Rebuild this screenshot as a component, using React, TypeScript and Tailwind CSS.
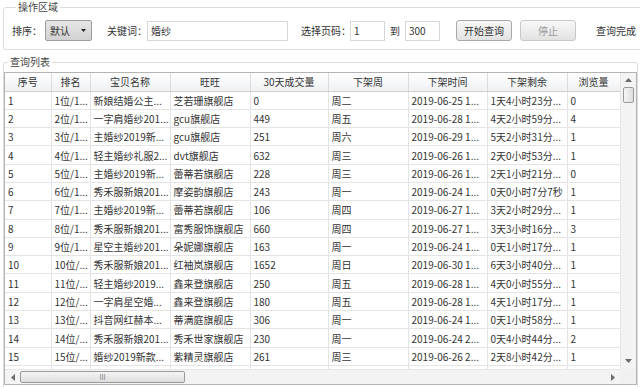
const font = { fontFamily: '"Noto Sans CJK SC", "Liberation Sans", sans-serif' };

const columns = [
  { title: '序号', width: 46 },
  { title: '排名', width: 39 },
  { title: '宝贝名称', width: 80 },
  { title: '旺旺', width: 80 },
  { title: '30天成交量', width: 78 },
  { title: '下架周', width: 80 },
  { title: '下架时间', width: 79 },
  { title: '下架剩余', width: 80 },
  { title: '浏览量', width: 53 },
];

const rows: string[][] = [
  ['1', '1位/1...', '新娘结婚公主...', '芝若珊旗舰店', '0', '周二', '2019-06-25 1...', '1天4小时23分...', '0'],
  ['2', '2位/1...', '一字肩婚纱201...', 'gcu旗舰店', '449', '周五', '2019-06-28 1...', '4天2小时59分...', '4'],
  ['3', '3位/1...', '主婚纱2019新...', 'gcu旗舰店', '251', '周六', '2019-06-29 1...', '5天2小时31分...', '1'],
  ['4', '4位/1...', '轻主婚纱礼服2...', 'dvt旗舰店', '632', '周三', '2019-06-26 1...', '2天0小时53分...', '1'],
  ['5', '5位/1...', '主婚纱2019新...', '蕾蒂若旗舰店', '228', '周三', '2019-06-26 1...', '2天1小时21分...', '0'],
  ['6', '6位/1...', '秀禾服新娘201...', '摩姿韵旗舰店', '243', '周一', '2019-06-24 1...', '0天0小时7分7秒', '1'],
  ['7', '7位/1...', '主婚纱2019新...', '蕾蒂若旗舰店', '106', '周四', '2019-06-27 1...', '3天2小时29分...', '1'],
  ['8', '8位/1...', '秀禾服新娘201...', '富秀服饰旗舰店', '660', '周四', '2019-06-27 1...', '3天3小时16分...', '3'],
  ['9', '9位/1...', '星空主婚纱201...', '朵妮娜旗舰店', '163', '周一', '2019-06-24 1...', '0天1小时17分...', '1'],
  ['10', '10位/...', '秀禾服新娘201...', '红袖岚旗舰店', '1652', '周日', '2019-06-30 1...', '6天3小时40分...', '1'],
  ['11', '11位/...', '轻主婚纱2019...', '鑫来登旗舰店', '250', '周五', '2019-06-28 1...', '4天0小时55分...', '1'],
  ['12', '12位/...', '一字肩星空婚...', '鑫来登旗舰店', '180', '周五', '2019-06-28 1...', '4天1小时17分...', '1'],
  ['13', '13位/...', '抖音网红赫本...', '蒂满庭旗舰店', '306', '周一', '2019-06-24 1...', '0天1小时58分...', '1'],
  ['14', '14位/...', '秀禾服新娘201...', '秀禾世家旗舰店', '230', '周一', '2019-06-24 2...', '0天4小时44分...', '2'],
  ['15', '15位/...', '婚纱2019新款...', '紫精灵旗舰店', '261', '周三', '2019-06-26 2...', '2天8小时42分...', '1'],
  ['16', '16位/...', '小婚纱2019新...', '瑞诗丽旗舰店', '204', '周一', '2019-06-24 1...', '0天1小时16分...', '0'],
];

function Arrow({ dir }: { dir: 'up' | 'down' | 'left' | 'right' }) {
  const pts = {
    up: '0,4 3.5,0 7,4',
    down: '0,0 7,0 3.5,4',
    left: '4,0 4,7 0,3.5',
    right: '0,0 0,7 4,3.5',
  }[dir];
  const vertical = dir === 'up' || dir === 'down';
  return (
    <svg width={vertical ? 7 : 4} height={vertical ? 4 : 7} viewBox={vertical ? '0 0 7 4' : '0 0 4 7'}>
      <polygon points={pts} fill="#6b6b6b" />
    </svg>
  );
}

function Button({ label, disabled }: { label: string; disabled?: boolean }) {
  return (
    <button
      className={`h-[21px] w-[56px] rounded-[3px] border bg-linear-to-b from-[#f8f8f8] to-[#e2e2e2] text-[10px] ${
        disabled ? 'border-[#c9c9c9] text-[#9a9a9a]' : 'border-[#a9a9a9] text-[#333]'
      }`}
    >
      {label}
    </button>
  );
}

export default function App() {
  return (
    <div className="h-[387px] w-[640px] overflow-hidden bg-white text-[10px] text-[#333]" style={font}>
      <fieldset className="ml-[3px] w-[650px] rounded-[3px] border border-[#dcdcdc] pt-[6px] pb-[8px] pl-[8px]">
        <legend className="ml-[4px] px-[2px] leading-[14px] text-[#444]">操作区域</legend>
        <div className="flex h-[21px] items-center whitespace-nowrap">
          <span className="w-[33px]">排序：</span>
          <div className="flex h-[21px] w-[47px] items-center justify-between rounded-[2px] border border-[#9c9c9c] bg-linear-to-b from-[#e6e6e6] to-[#d2d2d2] pr-[5px] pl-[4px]">
            <span>默认</span>
            <svg width="5" height="3" viewBox="0 0 5 3">
              <polygon points="0,0 5,0 2.5,3" fill="#222" />
            </svg>
          </div>
          <span className="ml-[15px] w-[40px]">关键词：</span>
          <div className="flex h-[20px] w-[141px] items-center border border-[#d6d6d6] pl-[3px]">婚纱</div>
          <span className="ml-[13px] w-[49px]">选择页码：</span>
          <div className="flex h-[20px] w-[35px] items-center border border-[#d6d6d6] pl-[3px]">1</div>
          <span className="ml-[5px] w-[15px]">到</span>
          <div className="flex h-[20px] w-[35px] items-center border border-[#d6d6d6] pl-[3px]">300</div>
          <div className="ml-[16px] flex gap-[8px]">
            <Button label="开始查询" />
            <Button label="停止" disabled />
          </div>
          <span className="ml-[20px]">查询完成</span>
        </div>
      </fieldset>

      <fieldset className="mt-[5px] ml-[3px] h-[340px] w-[635px] rounded-[3px] border border-[#dcdcdc] pt-[3px]">
        <legend className="ml-[4px] px-[2px] leading-[14px] text-[#444]">查询列表</legend>
        <div className="grid h-[313px] w-[633px] grid-cols-[615px_16px] grid-rows-[296px_15px] border border-[#b4b4b4]">
          <div className="overflow-hidden">
            <table className="w-[615px] table-fixed border-collapse">
              <colgroup>
                {columns.map((c) => (
                  <col key={c.title} style={{ width: c.width }} />
                ))}
              </colgroup>
              <thead>
                <tr className="h-[18px]">
                  {columns.map((c) => (
                    <th
                      key={c.title}
                      className="border-r border-b border-r-[#dcdcdc] border-b-[#cfcfcf] bg-linear-to-b from-white to-[#eef0f2] p-0 text-center font-normal whitespace-nowrap"
                    >
                      {c.title}
                    </th>
                  ))}
                </tr>
              </thead>
              <tbody>
                {rows.map((r) => (
                  <tr key={r[0]} className="h-[18.3px]">
                    {r.map((v, i) => (
                      <td
                        key={i}
                        className="overflow-hidden border-r border-b border-[#e4e4e4] px-[3px] py-0 whitespace-nowrap"
                      >
                        {v}
                      </td>
                    ))}
                  </tr>
                ))}
              </tbody>
            </table>
          </div>

          <div className="flex flex-col items-center border-l border-[#e6e6e6] bg-[#f3f3f3]">
            <div className="flex h-[14px] items-center">
              <Arrow dir="up" />
            </div>
            <div className="h-[16px] w-[11px] rounded-[2px] border border-[#9a9a9a] bg-linear-to-r from-[#f4f4f4] to-[#dedede]" />
            <div className="flex-1" />
            <div className="flex h-[16px] items-center">
              <Arrow dir="down" />
            </div>
          </div>

          <div className="flex items-center border-t border-[#e6e6e6] bg-[#f3f3f3]">
            <div className="flex w-[15px] justify-center">
              <Arrow dir="left" />
            </div>
            <div className="flex h-[12px] w-[165px] items-center justify-center rounded-[2px] border border-[#9a9a9a] bg-linear-to-b from-[#f4f4f4] to-[#dedede] text-[7px] leading-none text-[#777]">
              III
            </div>
            <div className="flex-1" />
            <div className="flex w-[15px] justify-center">
              <Arrow dir="right" />
            </div>
          </div>
          <div className="bg-[#f0f0f0]" />
        </div>
      </fieldset>
    </div>
  );
}
